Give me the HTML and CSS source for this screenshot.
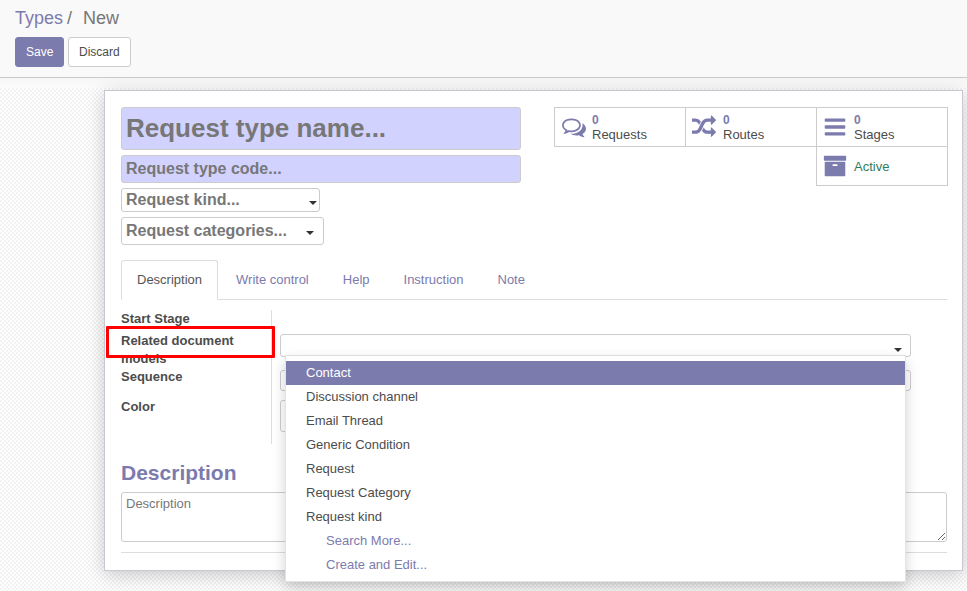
FILE: index.html
```html
<!DOCTYPE html>
<html lang="en">
<head>
  <meta charset="UTF-8">
  <meta name="viewport" content="width=device-width, initial-scale=1.0">
  <title>Types / New</title>
  <link rel="stylesheet" href="styles.css">
</head>
<body>
  <header class="control-panel">
    <div class="breadcrumb"><a href="#types">Types</a><span class="sep">/</span><span class="current">New</span></div>
    <div class="actions">
      <button class="btn btn-primary">Save</button>
      <button class="btn">Discard</button>
    </div>
  </header>
  <main class="content">
    <div class="sheet">
      <div class="sheet-top">
        <div class="title-fields">
          <div class="field field-name">Request type name...</div>
          <div class="field field-code">Request type code...</div>
          <div class="field-select select-kind">Request kind...<span class="caret"></span></div>
          <div class="field-select select-categories">Request categories...<span class="caret"></span></div>
        </div>
        <div class="stat-buttons">
          <div class="stat">
            <svg class="stat-icon" viewBox="0 0 1792 1792"><path d="M704 384q-153 0-286 52t-211.5 141-78.5 191q0 82 53 158t149 132l97 56-35 84q34-20 62-39l44-31 53 10q78 14 153 14 153 0 286-52t211.5-141 78.5-191-78.5-191-211.5-141-286-52zm0-128q191 0 353.5 68.5t256.5 186.5 94 257-94 257-256.5 186.5-353.5 68.5q-86 0-176-16-124 88-278 128-36 9-86 16h-3q-11 0-20.5-8t-11.5-21q-1-3-1-6.5t.5-6.5 2-6l2.5-5 3.5-5.5 4-5 4.5-5 4-4.5q5-6 23-25t26-29.5 22.5-29 25-38.5 20.5-44q-124-72-195-177t-71-224q0-139 94-257t256.5-186.5 353.5-68.5zm822 1169q10 24 20.5 44t25 38.5 22.5 29 26 29.5 23 25q1 1 4 4.5t4.5 5 4 5 3.5 5.5l2.5 5 2 6 .5 6.5-1 6.5q-3 14-13 22t-22 7q-50-7-86-16-154-40-278-128-90 16-176 16-271 0-472-132 58 4 88 4 161 0 309-45t264-129q125-92 192-212t67-254q0-77-23-152 129 71 204 178t75 230q0 120-71 224.5t-195 176.5z"/></svg>
            <div class="stat-text"><b>0</b><span>Requests</span></div>
          </div>
          <div class="stat">
            <svg class="stat-icon" viewBox="0 0 1792 1792"><path d="M666 481q-60 92-137 273-22-45-37-72.5t-40.5-63.5-51-56.5-63-35-81.5-14.5h-224q-14 0-23-9t-9-23v-192q0-14 9-23t23-9h224q250 0 410 225zm1126 799q0 14-9 23l-320 320q-9 9-23 9-13 0-22.5-9.5t-9.5-22.5v-192q-32 0-85 .5t-81 1-73-1-71-5-64-10.5-63-18.5-58-28.5-59-40-55-53.5-56-69.5q59-93 136-273 22 45 37 72.5t40.5 63.5 51 56.5 63 35 81.5 14.5h256v-192q0-14 9-23t23-9q12 0 24 10l319 319q9 9 9 23zm0-896q0 14-9 23l-320 320q-9 9-23 9-13 0-22.5-9.5t-9.5-22.5v-192h-256q-48 0-87 15t-69 45-51 61.5-45 77.5q-32 62-78 171-29 66-49.5 111t-54 105-64 100-74 83-90 68.5-106.5 42-128 16.5h-224q-14 0-23-9t-9-23v-192q0-14 9-23t23-9h224q48 0 87-15t69-45 51-61.5 45-77.5q32-62 78-171 29-66 49.5-111t54-105 64-100 74-83 90-68.5 106.5-42 128-16.5h256v-192q0-14 9-23t23-9q12 0 24 10l319 319q9 9 9 23z"/></svg>
            <div class="stat-text"><b>0</b><span>Routes</span></div>
          </div>
          <div class="stat">
            <svg class="stat-icon" viewBox="0 0 1792 1792"><path d="M1664 1344v128q0 26-19 45t-45 19h-1408q-26 0-45-19t-19-45v-128q0-26 19-45t45-19h1408q26 0 45 19t19 45zm0-512v128q0 26-19 45t-45 19h-1408q-26 0-45-19t-19-45v-128q0-26 19-45t45-19h1408q26 0 45 19t19 45zm0-512v128q0 26-19 45t-45 19h-1408q-26 0-45-19t-19-45v-128q0-26 19-45t45-19h1408q26 0 45 19t19 45z"/></svg>
            <div class="stat-text"><b>0</b><span>Stages</span></div>
          </div>
          <div class="stat stat-active">
            <svg class="stat-icon" viewBox="0 0 1792 1792"><path d="M1088 832q0-26-19-45t-45-19h-256q-26 0-45 19t-19 45 19 45 45 19h256q26 0 45-19t19-45zm576-192v960q0 26-19 45t-45 19h-1408q-26 0-45-19t-19-45v-960q0-26 19-45t45-19h1408q26 0 45 19t19 45zm64-448v256q0 26-19 45t-45 19h-1536q-26 0-45-19t-19-45v-256q0-26 19-45t45-19h1536q26 0 45 19t19 45z"/></svg>
            <div class="stat-text"><span class="active-label">Active</span></div>
          </div>
        </div>
      </div>

      <ul class="tabs">
        <li class="tab tab-current">Description</li>
        <li class="tab">Write control</li>
        <li class="tab">Help</li>
        <li class="tab">Instruction</li>
        <li class="tab">Note</li>
      </ul>

      <div class="form-group">
        <div class="form-labels">
          <label class="label-start">Start Stage</label>
          <label class="label-related">Related document models</label>
          <label class="label-sequence">Sequence</label>
          <label class="label-color">Color</label>
        </div>
        <div class="form-inputs">
          <div class="input input-related"><span class="caret"></span></div>
          <div class="input input-sequence"></div>
          <div class="input input-color"></div>
        </div>
      </div>

      <h2 class="section-title">Description</h2>
      <textarea class="textarea">Description</textarea>
      <hr class="rule">
    </div>
  </main>

  <div class="red-box"></div>

  <ul class="dropdown">
    <li class="active">Contact</li>
    <li>Discussion channel</li>
    <li>Email Thread</li>
    <li>Generic Condition</li>
    <li>Request</li>
    <li>Request Category</li>
    <li>Request kind</li>
    <li class="more">Search More...</li>
    <li class="more">Create and Edit...</li>
  </ul>
</body>
</html>
```

FILE: styles.css
```css
* {
  box-sizing: border-box;
}
html, body {
  height: 591px;
}
body {
  margin: 0;
  overflow: hidden;
  font-family: "Liberation Sans", Arial, sans-serif;
  font-size: 13px;
  color: #4c4c4c;
  background-color: #fff;
}
.control-panel {
  height: 78px;
  padding: 8px 15px 0;
  background-color: #f9f9f9;
  border-bottom: 1px solid #c9c9d0;
}
.breadcrumb {
  height: 21px;
  font-size: 18px;
  line-height: 21px;
  color: #777;
}
.breadcrumb a {
  color: #7c7bad;
  text-decoration: none;
}
.breadcrumb .sep {
  margin-left: 4px;
  margin-right: 11px;
  color: #777;
}
.actions {
  display: flex;
  gap: 4px;
  margin-top: 8px;
}
.btn {
  height: 30px;
  padding: 0 10px;
  font-family: inherit;
  font-size: 12px;
  color: #4c4c4c;
  background-color: #fff;
  border: 1px solid #ccc;
  border-radius: 3px;
}
.btn-primary {
  width: 49px;
  color: #fff;
  background-color: #7c7bad;
  border-color: #7c7bad;
}
.content {
  height: 513px;
  padding: 12px 4px 0 104px;
  background-color: #fff;
  background-image:
    linear-gradient(#f6f6f6, #fbfbfb),
    repeating-conic-gradient(#f3f3f3 0 25%, #fff 0 50%);
  background-size: 100% 10px, 4px 4px;
  background-repeat: no-repeat, repeat;
}
.sheet {
  height: 481px;
  padding: 16px 15px 0 16px;
  background-color: #fff;
  border: 1px solid #c8c8d3;
  box-shadow: 0 4px 18px rgba(0, 0, 0, 0.2);
}
.sheet-top {
  display: flex;
  justify-content: space-between;
  height: 153px;
}
.title-fields {
  width: 400px;
  color: #777;
  font-weight: bold;
}
.field {
  background-color: #d2d2ff;
  border: 1px solid #ccc;
  border-radius: 3px;
  padding-left: 4px;
}
.field-name {
  height: 43px;
  font-size: 26px;
  line-height: 41px;
}
.field-code {
  height: 28px;
  margin-top: 5px;
  font-size: 16px;
  line-height: 26px;
}
.field-select {
  position: relative;
  margin-top: 5px;
  padding-left: 4px;
  font-size: 16px;
  background-color: #fff;
  border: 1px solid #ccc;
  border-radius: 3px;
}
.select-kind {
  width: 199px;
  height: 24px;
  line-height: 21px;
}
.select-categories {
  width: 203px;
  height: 28px;
  line-height: 25px;
}
.caret {
  position: absolute;
  right: 2px;
  bottom: 6px;
  width: 0;
  height: 0;
  border-top: 4px solid #333;
  border-left: 4px solid transparent;
  border-right: 4px solid transparent;
}
.select-categories .caret {
  right: 9px;
  bottom: 9px;
}
.input-related .caret {
  right: 8px;
  bottom: 4px;
}
.stat-buttons {
  display: grid;
  grid-template-columns: 132px 131px 131px;
  grid-auto-rows: 40px;
  width: 394px;
  height: 79px;
  margin-right: -1px;
}
.stat {
  display: flex;
  align-items: center;
  gap: 7px;
  height: 40px;
  padding-left: 6px;
  border: 1px solid #ccc;
  border-left-width: 0;
}
.stat:first-child {
  gap: 6px;
  padding-left: 7px;
  border-left-width: 1px;
}
.stat-active {
  grid-column: 3;
  margin-top: -1px;
  margin-left: -1px;
  border-left-width: 1px;
}
.stat-icon {
  flex: none;
  width: 24px;
  height: 24px;
  fill: #7c7bad;
}
.stat-text {
  display: flex;
  flex-direction: column;
  padding-top: 2px;
  line-height: 15px;
}
.stat-active .stat-text {
  padding-top: 0;
}
.stat-text b {
  font-size: 12px;
  line-height: 13px;
  color: #7c7bad;
}
.active-label {
  color: #2f7d5b;
}
.tabs {
  display: flex;
  height: 40px;
  margin: 0;
  padding: 0;
  list-style: none;
  border-bottom: 1px solid #ddd;
}
.tab {
  height: 40px;
  padding: 0 15px;
  margin-right: 2px;
  line-height: 38px;
  color: #7c7bad;
  border: 1px solid transparent;
}
.tab-current {
  color: #555;
  background-color: #fff;
  border-color: #ddd;
  border-bottom-color: #fff;
  border-radius: 3px 3px 0 0;
}
.form-group {
  display: flex;
  height: 134px;
  margin-top: 10px;
}
.form-labels {
  display: flex;
  flex-direction: column;
  width: 151px;
  padding-right: 16px;
  border-right: 1px solid #ddd;
  font-weight: bold;
  line-height: 18px;
}
.label-related {
  margin-top: 4px;
}
.label-color {
  margin-top: 12px;
}
.form-inputs {
  flex: 1;
  padding: 24px 36px 0 8px;
}
.input {
  position: relative;
  background-color: #fff;
  border: 1px solid #ccc;
  border-radius: 3px;
}
.input-related {
  height: 23px;
}
.input-sequence {
  height: 21px;
  margin-top: 13px;
}
.input-color {
  width: 100px;
  height: 32px;
  margin-top: 9px;
}
.section-title {
  margin: 17px 0 0;
  font-size: 21px;
  line-height: 24px;
  color: #7c7bad;
}
.textarea {
  display: block;
  width: 100%;
  height: 50px;
  margin-top: 7px;
  padding: 3px 4px;
  font-family: inherit;
  font-size: 13px;
  color: #777;
  background-color: #fff;
  border: 1px solid #ccc;
  border-radius: 3px;
}
.rule {
  margin: 10px 0 0;
  border: 0;
  border-top: 1px solid #ddd;
}
.red-box {
  position: absolute;
  left: 106px;
  top: 326px;
  width: 169px;
  height: 32px;
  border: 3px solid #f00;
  border-radius: 1px;
}
.dropdown {
  position: absolute;
  left: 285px;
  top: 355px;
  width: 621px;
  height: 227px;
  margin: 0;
  padding: 5px 0 0;
  list-style: none;
  background-color: #fff;
  border: 1px solid #e3e3e3;
  border-top-color: #ddd;
  box-shadow: 0 6px 12px rgba(0, 0, 0, 0.18);
}
.dropdown li {
  height: 24px;
  padding-left: 20px;
  line-height: 23px;
}
.dropdown li.active {
  color: #fff;
  background-color: #7c7bad;
}
.dropdown li.more {
  padding-left: 40px;
  color: #7c7bad;
}
```
